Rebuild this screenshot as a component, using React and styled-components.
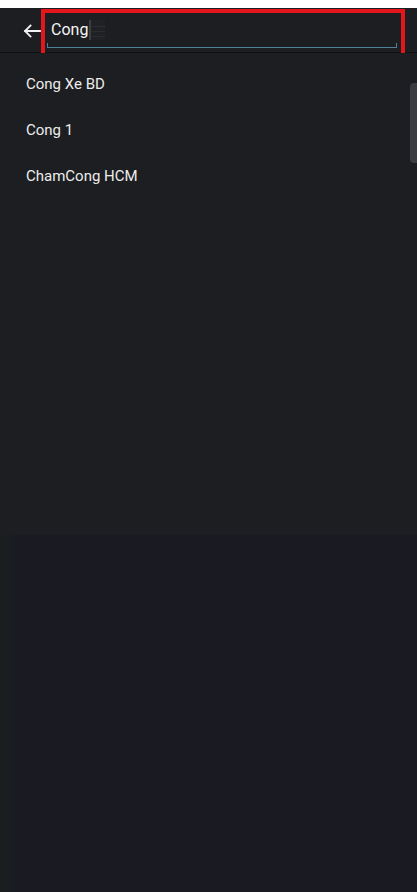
import styled, { createGlobalStyle } from "styled-components";

const GlobalStyle = createGlobalStyle`
  html, body {
    margin: 0;
    padding: 0;
    background: #1c1e21;
  }
  body {
    font-family: Roboto, "Noto Sans", "Liberation Sans", sans-serif;
  }
`;

const Page = styled.div`
  position: relative;
  display: flex;
  flex-direction: column;
  height: 892px;
  overflow: hidden;
  background: #1c1e21;
`;

const TopStrip = styled.div`
  height: 8px;
  background: #ffffff;
`;

const Header = styled.header`
  position: relative;
  display: flex;
  align-items: center;
  height: 44px;
  padding-left: 23px;
  border-bottom: 1px solid #0f1012;
  background: #1c1e21;
`;

const BackButton = styled.button`
  display: flex;
  align-items: center;
  justify-content: center;
  width: 18px;
  height: 18px;
  padding: 0;
  border: 0;
  background: none;
  color: #f2f2f2;
  margin-top: 1px;
`;

const SearchField = styled.div`
  position: relative;
  flex: 1;
  margin-left: 6px;
  margin-right: 20px;
  height: 100%;
  display: flex;
  align-items: center;
`;

const Query = styled.span`
  padding-left: 4px;
  font-size: 16px;
  color: #f4f4f4;
  line-height: 20px;
  margin-top: 0px;
`;

const Caret = styled.span`
  display: inline-block;
  width: 2px;
  height: 20px;
  margin-left: 1px;
  background: #3b3d40;
`;

const CaretGhost = styled.span`
  display: inline-block;
  width: 14px;
  height: 20px;
  background: linear-gradient(
    to bottom,
    transparent 6px,
    #2a2c30 6px,
    #2a2c30 7px,
    transparent 7px,
    transparent 11px,
    #2a2c30 11px,
    #2a2c30 12px,
    transparent 12px,
    transparent 16px,
    #2a2c30 16px,
    #2a2c30 17px,
    transparent 17px
  );
  background-color: #1f2124;
`;

const Underline = styled.div`
  position: absolute;
  left: 0;
  right: 0;
  bottom: 4px;
  height: 4px;
  border: 1px solid #4f8099;
  border-top: 0;
`;

const Highlight = styled.div`
  position: absolute;
  left: 41px;
  top: 9px;
  width: 356px;
  height: 45px;
  border: 4px solid #e3161c;
  pointer-events: none;
`;

const Body = styled.div`
  position: relative;
  flex: 1;
  display: flex;
  flex-direction: column;
`;

const List = styled.ul`
  list-style: none;
  margin: 0;
  padding: 8px 0 0;
  height: 474px;
  background: #1c1e21;
`;

const Item = styled.li`
  display: flex;
  align-items: center;
  height: 46px;
  padding-left: 26px;
  font-size: 15px;
  color: #ececec;
`;

const Lower = styled.div`
  flex: 1;
  border-left: 12px solid #1b1e20;
  background: #1a1a22;
`;

const ScrollThumb = styled.div`
  position: absolute;
  right: 0;
  top: 30px;
  width: 7px;
  height: 80px;
  border-radius: 4px 0 0 4px;
  background: #3a3c41;
`;

const results = ["Cong Xe BD", "Cong 1", "ChamCong HCM"];

export default function App() {
  return (
    <>
      <GlobalStyle />
      <Page>
        <TopStrip />
        <Header>
          <BackButton aria-label="Back">
            <svg width="18" height="14" viewBox="0 0 18 14" fill="none">
              <path
                d="M17 7H2M7.5 1.5L2 7l5.5 5.5"
                stroke="currentColor"
                strokeWidth="1.8"
                strokeLinecap="square"
              />
            </svg>
          </BackButton>
          <SearchField>
            <Query>Cong</Query>
            <Caret />
            <CaretGhost />
            <Underline />
          </SearchField>
        </Header>
        <Highlight />
        <Body>
          <List>
            {results.map(r => (
              <Item key={r}>{r}</Item>
            ))}
          </List>
          <Lower />
          <ScrollThumb />
        </Body>
      </Page>
    </>
  );
}
